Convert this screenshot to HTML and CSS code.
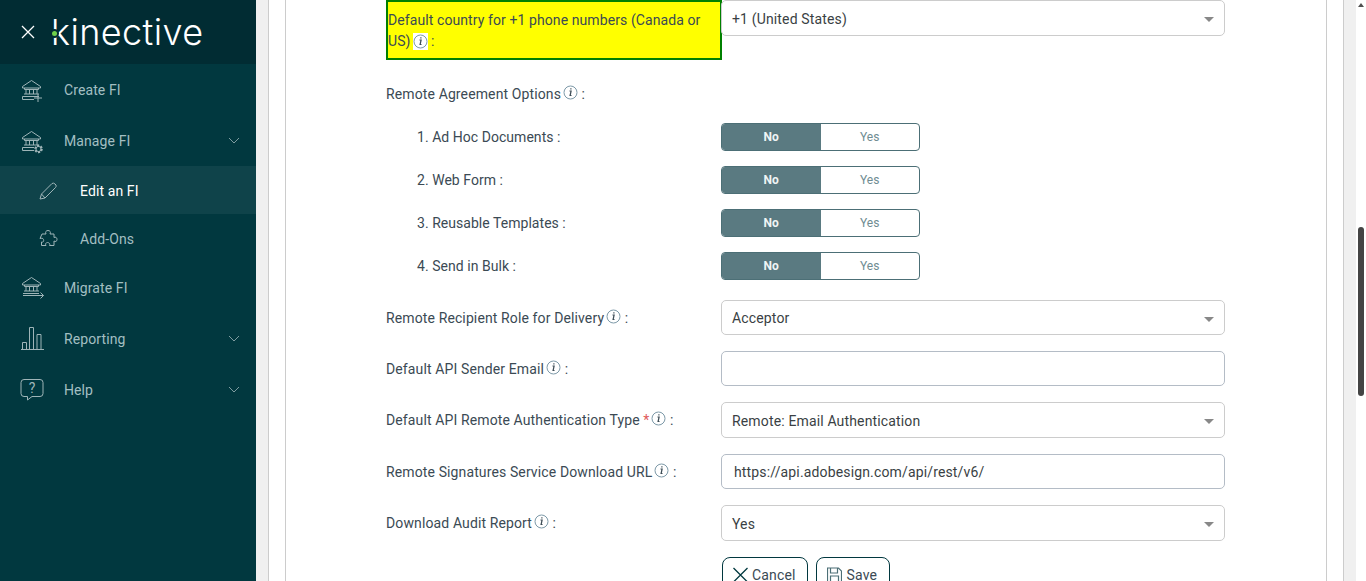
FILE: index.html
```html
<!DOCTYPE html>
<html lang="en">
<head>
    <meta charset="UTF-8">
    <meta name="viewport" content="width=device-width, initial-scale=1.0">
    <title>Edit an FI</title>
    <link rel="stylesheet" href="styles.css">
</head>
<body>
    <svg class="icon-defs" width="0" height="0">
        <symbol id="bank" viewBox="0 0 24 24">
            <path d="M2.5 8.5 11.5 2.5 20.5 8.5V10H2.5ZM4.5 10V11.5H18.5V10M6 11.5V16M9.5 11.5V16M13.5 11.5V16M17 11.5V16M4 16H19" fill="none" stroke="currentColor"/>
        </symbol>
        <symbol id="info" viewBox="0 0 15 17">
            <circle cx="7.5" cy="8.5" r="6.5" fill="none" stroke="#7d99a8"/>
            <path d="M6.500 7H8.100L7.100 11.500H8.500M7.900 4.300V5.400" fill="none" stroke="#3b4a54" stroke-width="1.2"/>
        </symbol>
    </svg>

    <aside class="sidebar">
        <div class="brand">
            <svg class="close-icon" width="16" height="16" viewBox="0 0 16 16"><path d="M2 2 14 14M14 2 2 14" stroke="#fff" stroke-width="1.3"/></svg>
            <span class="logo"><span class="logo-dot"></span>kinective</span>
        </div>
        <nav class="nav">
            <a class="nav-item">
                <svg class="nav-icon" width="24" height="24"><use href="#bank"/><path d="M2.500 18.500H19M2.500 18.500V21.500H14M18 16V24M14 20H22" stroke="currentColor" fill="none"/></svg>
                <span>Create FI</span>
            </a>
            <a class="nav-item">
                <svg class="nav-icon" width="24" height="24"><use href="#bank"/><path d="M2.500 18.500H14M2.500 18.500V21.500H14" stroke="currentColor" fill="none"/><circle cx="18.500" cy="20" r="3.200" fill="none" stroke="currentColor" stroke-width="2.200" stroke-dasharray="2 1.350"/><circle cx="18.500" cy="20" r="2.600" fill="none" stroke="currentColor"/></svg>
                <span>Manage FI</span>
                <svg class="chevron" width="12" height="7" viewBox="0 0 12 7"><path d="M1 1 6 6 11 1" fill="none" stroke="currentColor"/></svg>
            </a>
            <a class="nav-item sub active">
                <svg class="nav-icon" width="18" height="18" viewBox="0 0 18 18"><path d="M1 17 2.500 12 13 1.500Q14.500 .5 16 2L17 3Q17.500 4.500 16.500 5.500L6 16ZM2.500 12 6 16" fill="none" stroke="currentColor"/></svg>
                <span>Edit an FI</span>
            </a>
            <a class="nav-item sub">
                <svg class="nav-icon" width="18" height="18" viewBox="0 0 18 18"><path d="M7 4C6 2 7 .5 9 .5S12 2 11 4H15V7.500C16.500 6.500 18 7.500 18 9.500S16.500 12 15 11V15.500H10.500C11.500 14 10 12.500 8.500 12.500S6 14 7 15.500H2.500V12C4.500 12.500 5 11 4.500 9.500S2.500 8 1 8.500L3 4Z" fill="none" stroke="currentColor"/></svg>
                <span>Add-Ons</span>
            </a>
            <a class="nav-item">
                <svg class="nav-icon" width="24" height="24"><use href="#bank" y="-1"/><path d="M3 17.500H19M3 19.500H23.500M20.500 16.500 23.500 19.500 20.500 22.500" stroke="currentColor" fill="none"/></svg>
                <span>Migrate FI</span>
            </a>
            <a class="nav-item">
                <svg class="nav-icon" width="24" height="24" viewBox="0 0 24 24"><path d="M1 22.500H24M2.500 22V15.500H6.500V22M9.500 22V.5H13.500V22M17 22V7.500H21V22" fill="none" stroke="currentColor"/></svg>
                <span>Reporting</span>
                <svg class="chevron" width="12" height="7" viewBox="0 0 12 7"><path d="M1 1 6 6 11 1" fill="none" stroke="currentColor"/></svg>
            </a>
            <a class="nav-item">
                <svg class="nav-icon" width="24" height="24" viewBox="0 0 24 24"><path d="M4 1.500H20Q23 1.500 23 4.500V15.500Q23 18.500 20 18.500H12L7.500 22V18.500H4Q1 18.500 1 15.500V4.500Q1 1.500 4 1.500Z" fill="none" stroke="currentColor"/><text x="12" y="15" class="help-mark">?</text></svg>
                <span>Help</span>
                <svg class="chevron" width="12" height="7" viewBox="0 0 12 7"><path d="M1 1 6 6 11 1" fill="none" stroke="currentColor"/></svg>
            </a>
        </nav>
    </aside>

    <main class="content">
        <div class="panel">
            <form class="card">
                <div class="row first">
                    <div class="label highlight">Default country for +1 phone numbers (Canada or US)<svg class="info white"><use href="#info"/></svg> :</div>
                    <div class="select">+1 (United States)</div>
                </div>

                <div class="row options-title">
                    <div class="label">Remote Agreement Options<svg class="info"><use href="#info"/></svg> :</div>
                </div>

                <div class="row option">
                    <div class="label">1. Ad Hoc Documents :</div>
                    <div class="toggle"><span class="on">No</span><span>Yes</span></div>
                </div>
                <div class="row option">
                    <div class="label">2. Web Form :</div>
                    <div class="toggle"><span class="on">No</span><span>Yes</span></div>
                </div>
                <div class="row option">
                    <div class="label">3. Reusable Templates :</div>
                    <div class="toggle"><span class="on">No</span><span>Yes</span></div>
                </div>
                <div class="row option">
                    <div class="label">4. Send in Bulk :</div>
                    <div class="toggle"><span class="on">No</span><span>Yes</span></div>
                </div>

                <div class="row field short">
                    <div class="label">Remote Recipient Role for Delivery<svg class="info"><use href="#info"/></svg> :</div>
                    <div class="select">Acceptor</div>
                </div>
                <div class="row field short">
                    <div class="label">Default API Sender Email<svg class="info"><use href="#info"/></svg> :</div>
                    <div class="text-input"></div>
                </div>
                <div class="row field">
                    <div class="label">Default API Remote Authentication Type <span class="req">*</span><svg class="info"><use href="#info"/></svg> :</div>
                    <div class="select">Remote: Email Authentication</div>
                </div>
                <div class="row field short">
                    <div class="label">Remote Signatures Service Download URL<svg class="info"><use href="#info"/></svg> :</div>
                    <div class="text-input">https://api.adobesign.com/api/rest/v6/</div>
                </div>
                <div class="row field">
                    <div class="label">Download Audit Report<svg class="info"><use href="#info"/></svg> :</div>
                    <div class="select">Yes</div>
                </div>

                <div class="actions">
                    <button type="button" class="btn">
                        <svg width="15" height="16" viewBox="0 0 15 16"><path d="M.5 1 14.500 15M14.500 1 .5 15" stroke="#01383f" stroke-width="1.3"/></svg>
                        Cancel
                    </button>
                    <button type="button" class="btn save">
                        <svg width="15" height="16" viewBox="0 0 15 16"><path d="M.5 1H11.500L14.500 4V15H.5ZM3.500 1V6H10.500V1M3.500 15V9H11.500V15" fill="none" stroke="#4c6f76" stroke-width="1.2"/></svg>
                        Save
                    </button>
                </div>
            </form>
        </div>
    </main>

    <div class="scrollbar">
        <div class="arrow-up"></div>
        <div class="thumb"></div>
    </div>
</body>
</html>
```

FILE: styles.css
```css
* {
    box-sizing: border-box;
}
body {
    font-family: Roboto, "Liberation Sans", sans-serif;
    font-size: 14px;
    color: #3b4a54;
    display: flex;
    height: 581px;
    margin: 0;
    overflow: hidden;
    background-color: #fff;
}
.icon-defs {
    display: none;
}

/* Sidebar */
.sidebar {
    width: 256px;
    flex-shrink: 0;
    background-color: #01383f;
    color: #a3bfc2;
    letter-spacing: 0.1px;
}
.brand {
    height: 64px;
    display: flex;
    align-items: center;
    padding-left: 20px;
    background-color: #012c33;
}
.close-icon {
    flex-shrink: 0;
}
.logo {
    position: relative;
    margin-left: 15px;
    font-family: Inter, sans-serif;
    font-size: 36px;
    font-weight: 300;
    letter-spacing: 0.4px;
    color: #fff;
}
.logo-dot {
    position: absolute;
    left: 1px;
    top: 21px;
    width: 5px;
    height: 5px;
    border-radius: 50%;
    background-color: #6fd14a;
    box-shadow: 0 0 0 2px #012c33;
}
.nav-item {
    display: flex;
    align-items: center;
    height: 51px;
    padding: 0 16px 0 20px;
}
.nav-icon {
    flex-shrink: 0;
    margin-right: 20px;
    overflow: visible;
    color: #9fb5b8;
}
.chevron {
    margin-left: auto;
    color: #7f9ca0;
}
.nav-item.sub {
    height: 48px;
    padding: 1px 16px 0 39px;
}
.nav-item.sub .nav-icon {
    margin-right: 23px;
}
.nav-item.active {
    background-color: #0f434a;
    color: #fff;
}
.help-mark {
    font-size: 14px;
    text-anchor: middle;
    fill: currentColor;
}

/* Form */
.content {
    flex: 1;
    min-width: 0;
    padding: 0 12px;
    background-color: #f0f0f0;
}
.panel {
    height: 100%;
    padding: 0 16px;
    background-color: #fff;
    border-left: 1px solid #ccc;
    border-right: 1px solid #ccc;
}
.card {
    height: 100%;
    border-left: 1px solid #ccc;
    border-right: 1px solid #ccc;
    padding-left: 100px;
}
.row {
    display: flex;
    align-items: center;
}
.label {
    width: 335px;
    flex-shrink: 0;
    line-height: 22px;
    letter-spacing: 0.12px;
}
.first {
    align-items: flex-start;
    height: 60px;
}
.highlight {
    height: 60px;
    width: 336px;
    margin-right: -1px;
    padding: 8px 0 0 0;
    border: 2px solid #008000;
    background-color: #ffff00;
    line-height: 21px;
    letter-spacing: 0.09px;
}
.options-title {
    height: 22px;
    margin-top: 23px;
}
.option {
    height: 28px;
    margin-top: 15px;
}
.option .label {
    padding-left: 31px;
    letter-spacing: 0.04px;
}
.options-title + .option {
    margin-top: 18px;
}
.field {
    height: 36px;
    margin-top: 16px;
}
.field.short {
    height: 35px;
}
.option + .field {
    margin-top: 20px;
}
.select, .text-input {
    width: 504px;
    height: 100%;
    border: 1px solid #ccc;
    border-radius: 5px;
    padding: 1px 10px 0;
    display: flex;
    align-items: center;
    position: relative;
    color: #3a3f44;
    background-color: #fff;
    letter-spacing: 0.15px;
}
.first .select {
    height: 36px;
}
.select::after {
    content: "";
    position: absolute;
    right: 10px;
    top: 16px;
    border-left: 5px solid transparent;
    border-right: 5px solid transparent;
    border-top: 5px solid #888;
}
.text-input {
    padding-left: 12px;
    border-color: #b4bcc6;
}
.toggle {
    display: flex;
    width: 199px;
    height: 28px;
    border: 1px solid #4c6f76;
    border-radius: 4px;
    overflow: hidden;
    font-size: 12px;
    letter-spacing: 0.1px;
}
.toggle span {
    flex: 1;
    display: flex;
    align-items: center;
    justify-content: center;
    color: #6f8c92;
}
.toggle .on {
    background-color: #5a7a81;
    color: #f0f4f5;
    font-weight: bold;
}
.info {
    width: 15px;
    height: 17px;
    margin-left: 2px;
    vertical-align: -2px;
}
.info.white {
    margin-left: 2px;
    background-color: #fff;
    vertical-align: -4px;
}
.req {
    color: #e05a5a;
}
.actions {
    display: flex;
    gap: 8px;
    margin-top: 16px;
    margin-left: 336px;
}
.btn {
    display: flex;
    align-items: center;
    gap: 4px;
    height: 36px;
    padding: 0 11px 0 10px;
    border: 1px solid #01383f;
    border-radius: 8px;
    background-color: #fff;
    color: #3b4a54;
    font-family: inherit;
    font-size: 14px;
    letter-spacing: 0.15px;
}
.btn.save {
    gap: 5px;
    padding-right: 12px;
}

/* Scrollbar */
.scrollbar {
    position: relative;
    width: 10px;
    flex-shrink: 0;
    background-color: #fff;
}
.arrow-up {
    width: 0;
    margin: 3px auto 0;
    border-left: 3px solid transparent;
    border-right: 3px solid transparent;
    border-bottom: 4px solid #505050;
}
.thumb {
    position: absolute;
    left: 2px;
    top: 227px;
    width: 6px;
    height: 169px;
    border-radius: 3px;
    background-color: #444;
}
```
